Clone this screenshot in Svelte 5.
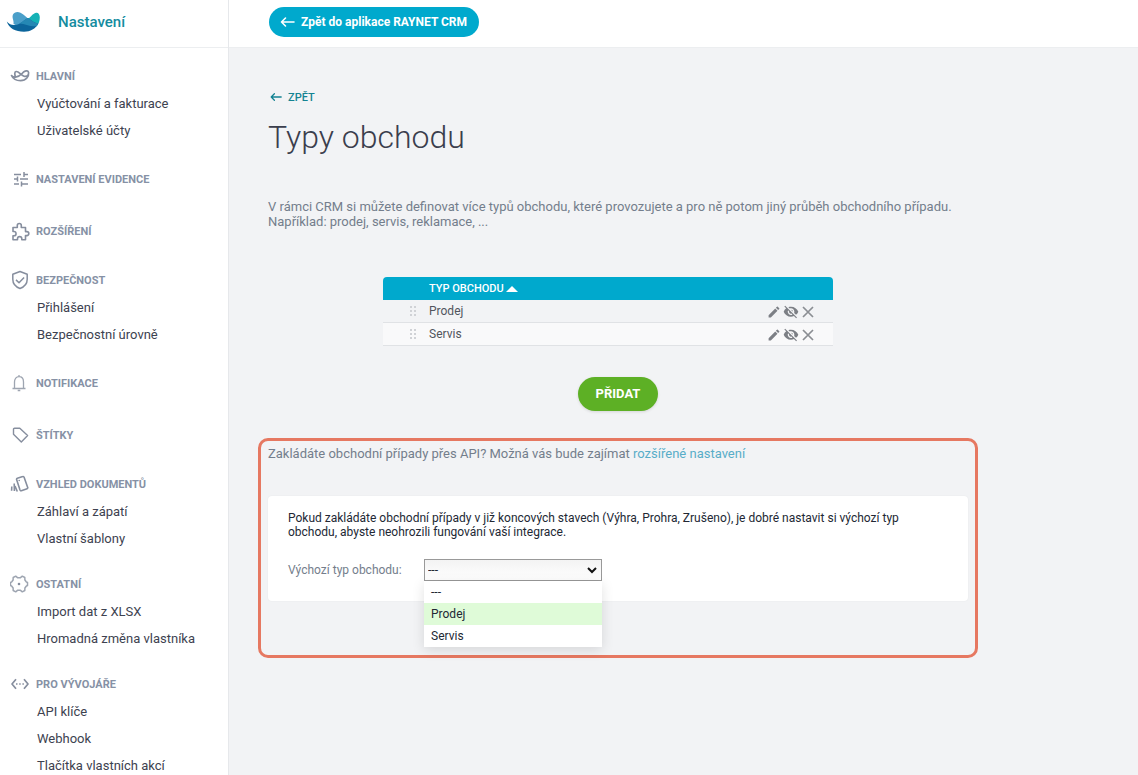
<script>
  const sections = [
    { title: 'Hlavní', icon: 'ray', items: ['Vyúčtování a fakturace', 'Uživatelské účty'] },
    { title: 'Nastavení evidence', icon: 'sliders', items: [] },
    { title: 'Rozšíření', icon: 'puzzle', spacing: 'loose', items: [] },
    { title: 'Bezpečnost', icon: 'shield', items: ['Přihlášení', 'Bezpečnostní úrovně'] },
    { title: 'Notifikace', icon: 'bell', items: [] },
    { title: 'Štítky', icon: 'tag', spacing: 'loose', items: [] },
    { title: 'Vzhled dokumentů', icon: 'cards', items: ['Záhlaví a zápatí', 'Vlastní šablony'] },
    { title: 'Ostatní', icon: 'gear', spacing: 'tight', items: ['Import dat z XLSX', 'Hromadná změna vlastníka'] },
    { title: 'Pro vývojáře', icon: 'code', spacing: 'tight', items: ['API klíče', 'Webhook', 'Tlačítka vlastních akcí'] }
  ];

  const types = ['Prodej', 'Servis'];
  const options = ['---', ...types];

  let selected = $state('---');
  let highlighted = $state('Prodej');
  let open = $state(true);

  function toggle(event) {
    event.preventDefault();
    open = !open;
  }

  function choose(option) {
    selected = option;
    open = false;
  }
</script>

{#snippet arrow(size)}
  <svg width={size} height="12" viewBox="0 0 15 12" fill="none" stroke="currentColor" stroke-width="1.6" stroke-linecap="round" stroke-linejoin="round">
    <path d="M14 6H1.5M5.5 2L1.5 6l4 4" />
  </svg>
{/snippet}

{#snippet menuIcon(name)}
  <svg class="menu-icon" viewBox="0 0 20 20" fill="none" stroke="currentColor" stroke-width="1.5" stroke-linejoin="round">
    {#if name === 'ray'}
      <path stroke-width="1.7" stroke-linecap="round" d="M1.5 9.5c1 1.300 2.300 1.800 4 1.700 4.500-.2 6-3.500 8.500-5.500 2-1.400 4.300-1 4.600 1 .4 3.600-2.300 8-8 8-4.400 0-7.600-1.800-9.100-5.200zM5.500 11c-.9-2.500-1.200-5.200.6-5.500 2.700-.4 4.600 3.700 7.900 4.700 2 .5 3.600-.2 4.300-1.700" />
    {:else if name === 'sliders'}
      <path d="M4 5.500h7M14 5.500h4M14 3v5M4 10h3M10 10h8M7.500 7.500v5M4 15h5M12 15h6M11.500 12.500v5" />
    {:else if name === 'puzzle'}
      <path stroke-width="1.600" d="M3 6.500h4.300V4.500a2 2 0 0 1 4 0v2h4.200v4.100h1.300a2 2 0 0 1 0 4h-1.300v4.100h-3.700v-.9a2.100 2.100 0 0 0-4.300 0v.9H3v-3.900h.9a2.100 2.100 0 0 0 0-4.300H3z" />
    {:else if name === 'shield'}
      <path d="M10 1.500l7.200 2.700v5c0 4.300-3 7.700-7.200 9.300-4.200-1.600-7.200-5-7.200-9.300v-5zM6 9.900l3 2.800 5.100-5.300" />
    {:else if name === 'bell'}
      <path stroke-width="1.300" opacity=".8" d="M2.500 15.500h13M4.500 15.200V9c0-3.200 1.800-5.300 4.500-5.300s4.500 2.100 4.500 5.300v6.200M9 3.700V2M7.700 17.500h2.600" />
    {:else if name === 'tag'}
      <path stroke-width="1.400" d="M4.500 3.200h5.300l7.800 7.300-6.300 6.500-7.800-7.700V4.200a1 1 0 0 1 1-1z" />
    {:else if name === 'cards'}
      <path stroke-width="1.600" d="M7.300 4.300l5.500-1.700a1 1 0 0 1 1.300.6l3.600 10.200a1 1 0 0 1-.6 1.300l-5.800 2a1 1 0 0 1-1.300-.6L6.600 5.600a1 1 0 0 1 .7-1.300zM4.200 9.500l.2 7.500M1.800 12.500l-.2 4.200M5 12l2.300 5.500" />
      <circle cx="9.200" cy="6.500" r=".8" fill="currentColor" stroke="none" />
    {:else if name === 'gear'}
      <path opacity=".8" stroke-width="1.500" d="M5.700 2.200l1.800 1.500h3l1.800-1.500 2.500 1.300.1 2.500 1.300 1.800 1.300.7v3l-1.300.7-1.300 1.800-.1 2.500-2.500 1.300-1.800-1.500h-3l-1.800 1.500-2.500-1.300-.1-2.500-1.300-1.800-1.300-.7v-3l1.300-.7L3.100 6l.1-2.500z" />
      <circle cx="9" cy="10" r="1.300" fill="currentColor" stroke="none" />
    {:else if name === 'code'}
      <path stroke-width="1.700" d="M6 5.200L2 10l4 4.800M14 5.200l4 4.800-4 4.800" />
      <path stroke-width="1.700" stroke-dasharray="1.500 1.700" d="M6 10h8.500" />
    {/if}
  </svg>
{/snippet}

<div class="app">
  <aside class="sidebar">
    <div class="brand">
      <svg class="logo" viewBox="0 0 36 22">
        <path fill="#4b9fc9" d="M7.500 13C8.200 9.500 5.500 6.500 7 3.500 8.200 1 11.500.3 14.500 1.700 18 3.300 20.500 6.500 23 8.500L16 17z" />
        <path fill="#15b2b6" d="M21 8.500C24 7 26.500 2.500 30 1.700c2.500-.4 3.800 1.800 3.800 4.800 0 3.500-1.200 6.500-3.300 9L23 12z" />
        <path fill="#0c659b" d="M.8 10.500c2.200 2.700 4.700 3.700 8 3.500 6.200-.4 9.200-5.500 13.200-7 3.500 2.500 6 5 10.300 5.500C29.500 17.800 24.500 20.700 18 20.700 9.500 20.700 3 17.500.8 10.500z" />
        <path fill="#2588b4" d="M13.500 12.500C17 10.500 19 8.200 22 7c3.500 2.500 6 5 10.300 5.500l-1.500 2.500c-6 1.500-11.300-2.500-17.300-2.500z" />
      </svg>
      <span>Nastavení</span>
    </div>
    <nav>
      {#each sections as section}
        <section class="group {section.spacing ?? ''}">
          <h2>{@render menuIcon(section.icon)}{section.title}</h2>
          {#if section.items.length}
            <ul>
              {#each section.items as item}
                <li><a href="#top">{item}</a></li>
              {/each}
            </ul>
          {/if}
        </section>
      {/each}
    </nav>
  </aside>

  <div class="page">
    <header class="topbar">
      <a class="back-app" href="#top">{@render arrow(15)}Zpět do aplikace RAYNET CRM</a>
    </header>

    <main>
      <a class="back" href="#top">{@render arrow(12)}Zpět</a>
      <h1>Typy obchodu</h1>
      <p class="text">
        V rámci CRM si můžete definovat více typů obchodu, které provozujete a pro ně potom jiný průběh obchodního případu.<br />
        Například: prodej, servis, reklamace, ...
      </p>

      <div class="table-wrap">
        <table>
          <thead>
            <tr>
              <th class="grip"></th>
              <th>Typ obchodu <svg width="12" height="6" viewBox="0 0 12 6"><path fill="#fff" d="M0 6l6-6 6 6z" /></svg></th>
              <th class="actions"></th>
            </tr>
          </thead>
          <tbody>
            {#each types as type}
              <tr>
                <td class="grip">
                  <svg width="6" height="10" viewBox="0 0 6 10" fill="#d0d2d6">
                    {#each [0, 4, 8] as y}
                      <rect x="0" {y} width="2" height="2" />
                      <rect x="4" {y} width="2" height="2" />
                    {/each}
                  </svg>
                </td>
                <td>{type}</td>
                <td class="actions">
                  <div class="buttons">
                    <button aria-label="Upravit">
                      <svg width="12" height="12" viewBox="2 2 20 20"><path d="M3 17.250V21h3.750L17.810 9.940l-3.750-3.750zM20.710 7.040a1 1 0 0 0 0-1.410l-2.340-2.340a1 1 0 0 0-1.410 0l-1.830 1.830 3.750 3.750z" /></svg>
                    </button>
                    <button aria-label="Skrýt">
                      <svg width="16" height="14" viewBox="0 2 24 21"><path d="M12 7c2.760 0 5 2.240 5 5 0 .65-.13 1.260-.36 1.830l2.920 2.920c1.510-1.260 2.700-2.890 3.430-4.750-1.730-4.390-6-7.500-11-7.500-1.400 0-2.740.25-3.980.7l2.160 2.160C10.740 7.130 11.350 7 12 7zM2 4.270l2.740 2.740A11.800 11.800 0 0 0 1 12c1.730 4.390 6 7.500 11 7.500 1.550 0 3.030-.3 4.380-.84L19.730 22 21 20.730 3.270 3zM7.530 9.800l1.550 1.550A3 3 0 0 0 12.650 14.920l1.550 1.550A5 5 0 0 1 7.530 9.800zm4.310-.78l3.150 3.150.02-.16a3 3 0 0 0-3-3z" /></svg>
                    </button>
                    <button aria-label="Smazat">
                      <svg width="12" height="12" viewBox="0 0 12 12"><path d="M1 1l10 10M11 1L1 11" stroke="#8b8e93" stroke-width="1.700" /></svg>
                    </button>
                  </div>
                </td>
              </tr>
            {/each}
          </tbody>
        </table>
      </div>

      <button class="add">Přidat</button>

      <section class="callout">
        <p class="text">
          Zakládáte obchodní případy přes API? Možná vás bude zajímat <a href="#top">rozšířené nastavení</a>
        </p>
        <div class="card">
          <p>
            Pokud zakládáte obchodní případy v již koncových stavech (Výhra, Prohra, Zrušeno), je dobré nastavit si výchozí typ obchodu, abyste neohrozili fungování vaší integrace.
          </p>
          <div class="field">
            <label for="default-type">Výchozí typ obchodu:</label>
            <div class="combo">
              <select id="default-type" bind:value={selected} onmousedown={toggle}>
                {#each options as option}
                  <option>{option}</option>
                {/each}
              </select>
              <svg class="chevron" width="10" height="7" viewBox="0 0 10 7"><path d="M1 1l4 4 4-4" fill="none" stroke="#111" stroke-width="2" /></svg>
              {#if open}
                <div class="menu">
                  {#each options as option}
                    <button
                      class:active={option === highlighted}
                      onmouseenter={() => (highlighted = option)}
                      onclick={() => choose(option)}>{option}</button>
                  {/each}
                </div>
              {/if}
            </div>
          </div>
        </div>
      </section>
    </main>
  </div>
</div>

<style>
  :global(body) {
    margin: 0;
    background: #f2f3f5;
  }

  .app {
    display: flex;
    height: 100vh;
    overflow: hidden;
    font: 13px/15px Roboto, sans-serif;
    color: #3d4250;
  }

  a {
    color: inherit;
    text-decoration: none;
  }

  button {
    font: inherit;
    border: 0;
    cursor: pointer;
  }

  h1, h2, p, ul {
    margin: 0;
    padding: 0;
  }

  .sidebar {
    flex: 0 0 228px;
    background: #fff;
    border-right: 1px solid #e6e8eb;
    overflow: hidden;
  }

  .brand {
    display: flex;
    align-items: center;
    gap: 16px;
    box-sizing: border-box;
    height: 48px;
    padding: 0 6px 3px;
    border-bottom: 1px solid #eceef0;
    font-size: 15px;
    line-height: 18px;
    font-weight: 500;
    color: #148c9f;
  }

  .logo {
    width: 36px;
    height: 22px;
  }

  nav {
    padding-top: 14px;
  }

  .group + .group {
    margin-top: 21px;
  }

  .group + .loose {
    margin-top: 24px;
  }

  .group + .tight {
    margin-top: 18px;
  }

  h2 {
    display: flex;
    align-items: center;
    gap: 6px;
    height: 28px;
    padding-left: 10px;
    font-size: 11px;
    font-weight: 700;
    text-transform: uppercase;
    color: #8691a5;
  }

  .menu-icon {
    width: 20px;
    height: 20px;
    color: #868e9e;
  }

  ul {
    list-style: none;
  }

  li a {
    display: block;
    padding-left: 37px;
    line-height: 27px;
  }

  .page {
    flex: 1;
    min-width: 0;
  }

  .topbar {
    display: flex;
    align-items: center;
    box-sizing: border-box;
    height: 48px;
    padding: 0 40px 3px;
    background: #fff;
    border-bottom: 1px solid #eceef0;
  }

  .back-app {
    display: flex;
    align-items: center;
    gap: 6px;
    height: 30px;
    padding: 0 12px 0 11px;
    border-radius: 15px;
    background: #00a9cd;
    color: #fff;
    font-size: 12px;
    line-height: 16px;
    font-weight: 700;
  }

  main {
    display: flex;
    flex-direction: column;
    max-width: 700px;
    padding: 41px 39px 0;
  }

  .back {
    display: flex;
    align-items: center;
    gap: 6px;
    height: 16px;
    padding-left: 2px;
    font-size: 11px;
    font-weight: 500;
    text-transform: uppercase;
    color: #148392;
  }

  h1 {
    margin-top: 12px;
    font-size: 32px;
    line-height: 40px;
    font-weight: 300;
    color: #3b3e4d;
  }

  .text {
    color: #747e8c;
  }

  h1 + .text {
    margin-top: 42px;
  }

  .table-wrap {
    display: flex;
    justify-content: center;
    margin-top: 48px;
    padding-right: 20px;
  }

  table {
    width: 450px;
    border-spacing: 0;
    font-size: 12px;
    color: #51555d;
  }

  th, td {
    height: 22px;
    padding: 0;
    text-align: left;
  }

  th {
    height: 23px;
    background: #00a9cd;
    color: #fff;
    font-size: 11px;
    font-weight: 500;
    text-transform: uppercase;
  }

  th:first-child {
    border-top-left-radius: 4px;
  }

  th:last-child {
    border-top-right-radius: 4px;
  }

  td {
    border-bottom: 1px solid #e0e2e5;
  }

  tbody tr:nth-child(even) {
    background: #f9f9fa;
  }

  .grip {
    width: 46px;
  }

  td.grip svg {
    display: block;
    margin-left: 27px;
  }

  .actions {
    width: 65px;
  }

  .buttons {
    display: flex;
    align-items: center;
    gap: 3px;
    padding-top: 2px;
  }

  .buttons button {
    display: flex;
    padding: 0;
    background: none;
    fill: #7c7f85;
  }

  .add {
    align-self: center;
    height: 34px;
    margin-top: 31px;
    padding: 0 18px;
    border-radius: 17px;
    background: #5db025;
    box-shadow: 0 1px 3px rgba(0, 0, 0, 0.12);
    color: #fff;
    font-size: 13px;
    line-height: 16px;
    font-weight: 700;
    text-transform: uppercase;
  }

  .callout {
    margin: 27px -10px 0;
    padding: 5px 7px 54px;
    border: 3px solid #e67861;
    border-radius: 10px;
  }

  .callout a {
    color: #58adc8;
  }

  .card {
    margin-top: 35px;
    padding: 15px 20px 20px;
    border-radius: 4px;
    background: #fff;
    box-shadow: 0 0 2px rgba(0, 0, 0, 0.06);
    font-size: 12px;
    line-height: 14px;
    color: #222834;
  }

  .field {
    display: flex;
    align-items: center;
    margin-top: 20px;
  }

  label {
    width: 136px;
    color: #747e8c;
  }

  .combo {
    position: relative;
    width: 178px;
  }

  select {
    display: block;
    box-sizing: border-box;
    width: 100%;
    height: 22px;
    padding: 0 3px;
    border: 1px solid #999;
    border-radius: 0;
    appearance: none;
    background: linear-gradient(#f3f3f3, #fff);
    font: inherit;
    color: #222834;
  }

  .chevron {
    position: absolute;
    top: 8px;
    right: 5px;
    pointer-events: none;
  }

  .menu {
    position: absolute;
    top: 100%;
    left: 0;
    width: 100%;
    background: #fff;
    box-shadow: 0 3px 12px rgba(0, 0, 0, 0.12);
    z-index: 1;
  }

  .menu button {
    display: block;
    width: 100%;
    height: 22px;
    padding: 0 7px;
    background: none;
    text-align: left;
    color: #222834;
  }

  .menu .active {
    background: #dffbd8;
  }
</style>
